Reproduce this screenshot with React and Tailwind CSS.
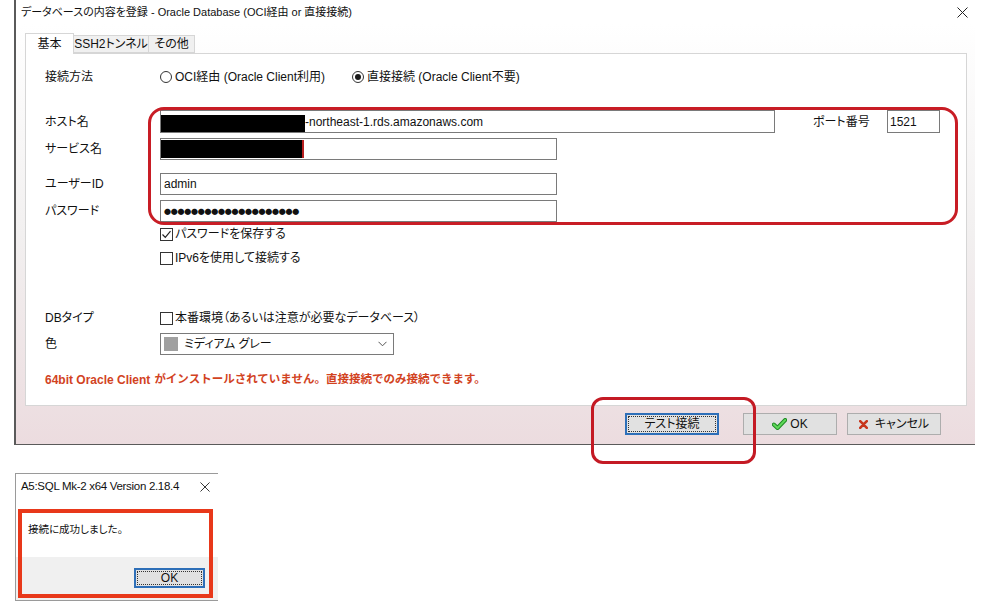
import React from 'react';

const Radio = ({ checked, children }) => (
  <span className="flex items-center gap-[3px]">
    <span className="w-[12px] h-[12px] rounded-full border border-[#333] bg-white flex items-center justify-center">
      {checked && <span className="w-[6px] h-[6px] rounded-full bg-[#1a1a1a]" />}
    </span>
    <span>{children}</span>
  </span>
);

const Checkbox = ({ checked, children }) => (
  <span className="flex items-center gap-[2px] h-[16px]">
    <span className="w-[13px] h-[13px] border border-[#333] bg-white flex items-center justify-center">
      {checked && (
        <svg width="11" height="11" viewBox="0 0 11 11">
          <path d="M1.5 5.5 L4.3 8.3 L9.5 2.2" fill="none" stroke="#222" strokeWidth="1.2" />
        </svg>
      )}
    </span>
    <span>{children}</span>
  </span>
);

const Box = ({ className = '', children }) => (
  <div className={`h-[22px] border border-[#7a7a7a] bg-white flex ${className}`}>{children}</div>
);

const CloseX = ({ size = 11 }) => (
  <svg width={size} height={size} viewBox="0 0 11 11">
    <path d="M0.5 0.5 L10.5 10.5 M10.5 0.5 L0.5 10.5" stroke="#222" strokeWidth="1" />
  </svg>
);

const App = () => {
  return (
    <div className="relative w-[990px] h-[608px] bg-white overflow-hidden text-[12px] leading-none text-[#111] font-['Liberation_Sans','Noto_Sans_CJK_JP',sans-serif] [font-feature-settings:'palt']">
      {/* Main dialog */}
      <div className="ml-[14px] w-[961px] h-[445px] border-l-2 border-b border-[#5a5a5a] flex flex-col">
        {/* Title bar */}
        <div className="h-[24px] bg-white flex items-center justify-between pl-[5px] pr-[7px]">
          <span className="text-[11px]">データベースの内容を登録 - Oracle Database (OCI経由 or 直接接続)</span>
          <CloseX />
        </div>

        <div className="flex-1 flex flex-col bg-linear-to-b from-[#ffffff] via-[#f2f0f0] to-[#ecdcdf]">
          {/* Tabs */}
          <div className="mt-[9px] ml-[9px] h-[20px] flex items-end">
            <div className="w-[49px] h-[21px] -mb-px bg-white border border-b-0 border-[#d6d6d6] flex items-center justify-center relative z-10">
              基本
            </div>
            <div className="w-[75px] h-[18px] bg-[#f0f0f0] border border-l-0 border-[#d6d6d6] flex items-center justify-center">
              SSH2トンネル
            </div>
            <div className="w-[46px] h-[18px] bg-[#f0f0f0] border border-l-0 border-[#d6d6d6] flex items-center justify-center">
              その他
            </div>
          </div>

          {/* Tab page */}
          <div className="ml-[9px] w-[942px] h-[353px] bg-white border border-[#d6d6d6] pl-[19px] flex flex-col">
            <div className="mt-[13px] h-[20px] flex items-center">
              <span className="w-[115px]">接続方法</span>
              <span className="w-[192px]">
                <Radio>OCI経由 (Oracle Client利用)</Radio>
              </span>
              <Radio checked>直接接続 (Oracle Client不要)</Radio>
            </div>

            <div className="mt-[23px] flex items-center">
              <span className="w-[115px]">ホスト名</span>
              <Box className="w-[615px] h-[23px]">
                <span className="self-end w-[144px] h-[17px] bg-black" />
                <span className="self-center">-northeast-1.rds.amazonaws.com</span>
              </Box>
              <span className="ml-[38px] w-[74px]">ポート番号</span>
              <Box className="w-[53px] h-[23px] items-center pl-[2px]">1521</Box>
            </div>

            <div className="mt-[5px] flex items-center">
              <span className="w-[115px]">サービス名</span>
              <Box className="w-[397px] items-center">
                <span className="w-[143px] h-[18px] bg-black border-r-2 border-r-[#b82020]" />
              </Box>
            </div>

            <div className="mt-[13px] flex items-center">
              <span className="w-[115px]">ユーザーID</span>
              <Box className="w-[397px] items-center pl-[3px]">admin</Box>
            </div>

            <div className="mt-[5px] flex items-center">
              <span className="w-[115px]">パスワード</span>
              <Box className="w-[397px] items-center pl-[3px]">
                <span className="font-['Noto_Sans_CJK_JP',sans-serif] text-[7px] tracking-[-0.25px] [font-feature-settings:normal]">
                  ●●●●●●●●●●●●●●●●●●●●
                </span>
              </Box>
            </div>

            <div className="mt-[4px] pl-[115px]">
              <Checkbox checked>パスワードを保存する</Checkbox>
            </div>
            <div className="mt-[8px] pl-[115px]">
              <Checkbox>IPv6を使用して接続する</Checkbox>
            </div>

            <div className="mt-[44px] h-[16px] flex items-center">
              <span className="w-[115px]">DBタイプ</span>
              <Checkbox>本番環境（あるいは注意が必要なデータベース）</Checkbox>
            </div>

            <div className="mt-[7px] flex items-center">
              <span className="w-[115px]">色</span>
              <Box className="w-[234px] items-center pl-[3px] pr-[6px]">
                <span className="w-[14px] h-[14px] bg-[#a0a0a0]" />
                <span className="ml-[6px] flex-1">ミディアム グレー</span>
                <svg width="9" height="6" viewBox="0 0 9 6">
                  <path d="M0.5 0.8 L4.5 4.8 L8.5 0.8" fill="none" stroke="#555" strokeWidth="1" />
                </svg>
              </Box>
            </div>

            <div className="mt-[17px] h-[16px] flex items-center text-[#d2431f]">
              <span className="font-semibold">64bit Oracle Client</span>
              <span className="ml-[4px] font-bold text-[11.5px] [font-feature-settings:normal]">
                がインストールされていません。直接接続でのみ接続できます。
              </span>
            </div>
          </div>

          {/* Footer buttons */}
          <div className="flex justify-end pt-[7px] pr-[34px]">
            <button className="relative w-[94px] h-[22px] bg-[#e1e1e1] border-2 border-[#2e6fb8] flex items-center justify-center">
              <span className="absolute inset-[1px] border border-dotted border-[#333]" />
              テスト接続
            </button>
            <button className="ml-[24px] w-[94px] h-[22px] bg-[#e1e1e1] border border-[#adadad] flex items-center justify-center gap-[3px]">
              <svg width="15" height="12" viewBox="0 0 15 12">
                <path d="M1.8 6.5 L5.5 10 L13.2 2" fill="none" stroke="#1f8b24" strokeWidth="4" strokeLinecap="round" strokeLinejoin="round" />
                <path d="M1.8 6.5 L5.5 10 L13.2 2" fill="none" stroke="#5fd85a" strokeWidth="2" strokeLinecap="round" strokeLinejoin="round" />
              </svg>
              OK
            </button>
            <button className="ml-[10px] w-[94px] h-[22px] bg-[#e1e1e1] border border-[#adadad] flex items-center justify-center gap-[7px]">
              <svg width="9" height="9" viewBox="0 0 9 9">
                <path d="M1.2 1.2 L7.8 7.8 M7.8 1.2 L1.2 7.8" stroke="#c7361c" strokeWidth="2.6" strokeLinecap="round" />
              </svg>
              キャンセル
            </button>
          </div>
        </div>
      </div>

      {/* Message box */}
      <div className="mt-[28px] ml-[15px] w-[203px] h-[128px] border-l border-t border-b border-[#9a9a9a] flex flex-col">
        <div className="h-[26px] bg-white flex items-center justify-between pl-[5px] pr-[8px]">
          <span className="text-[11.5px] tracking-[-0.3px]">A5:SQL Mk-2 x64 Version 2.18.4</span>
          <CloseX size={10} />
        </div>
        <div className="h-[57px] bg-white flex items-center pl-[12px] pt-[2px] text-[10.5px]">接続に成功しました。</div>
        <div className="flex-1 bg-[#f0f0f0] flex justify-end pt-[11px] pr-[13px]">
          <button className="relative w-[71px] h-[20px] bg-[#e1e1e1] border-2 border-[#2e6fb8] flex items-center justify-center">
            <span className="absolute inset-[1px] border border-dotted border-[#333]" />
            OK
          </button>
        </div>
      </div>

      {/* Annotations */}
      <div className="absolute left-[148px] top-[107px] w-[810px] h-[118px] border-[3px] border-[#c81d25] rounded-[16px]" />
      <div className="absolute left-[591px] top-[397px] w-[165px] h-[67px] border-[3px] border-[#c41a24] rounded-[12px]" />
      <div className="absolute left-[18px] top-[509px] w-[195px] h-[89px] border-[4px] border-[#e8381a]" />
    </div>
  );
};

export default App;
